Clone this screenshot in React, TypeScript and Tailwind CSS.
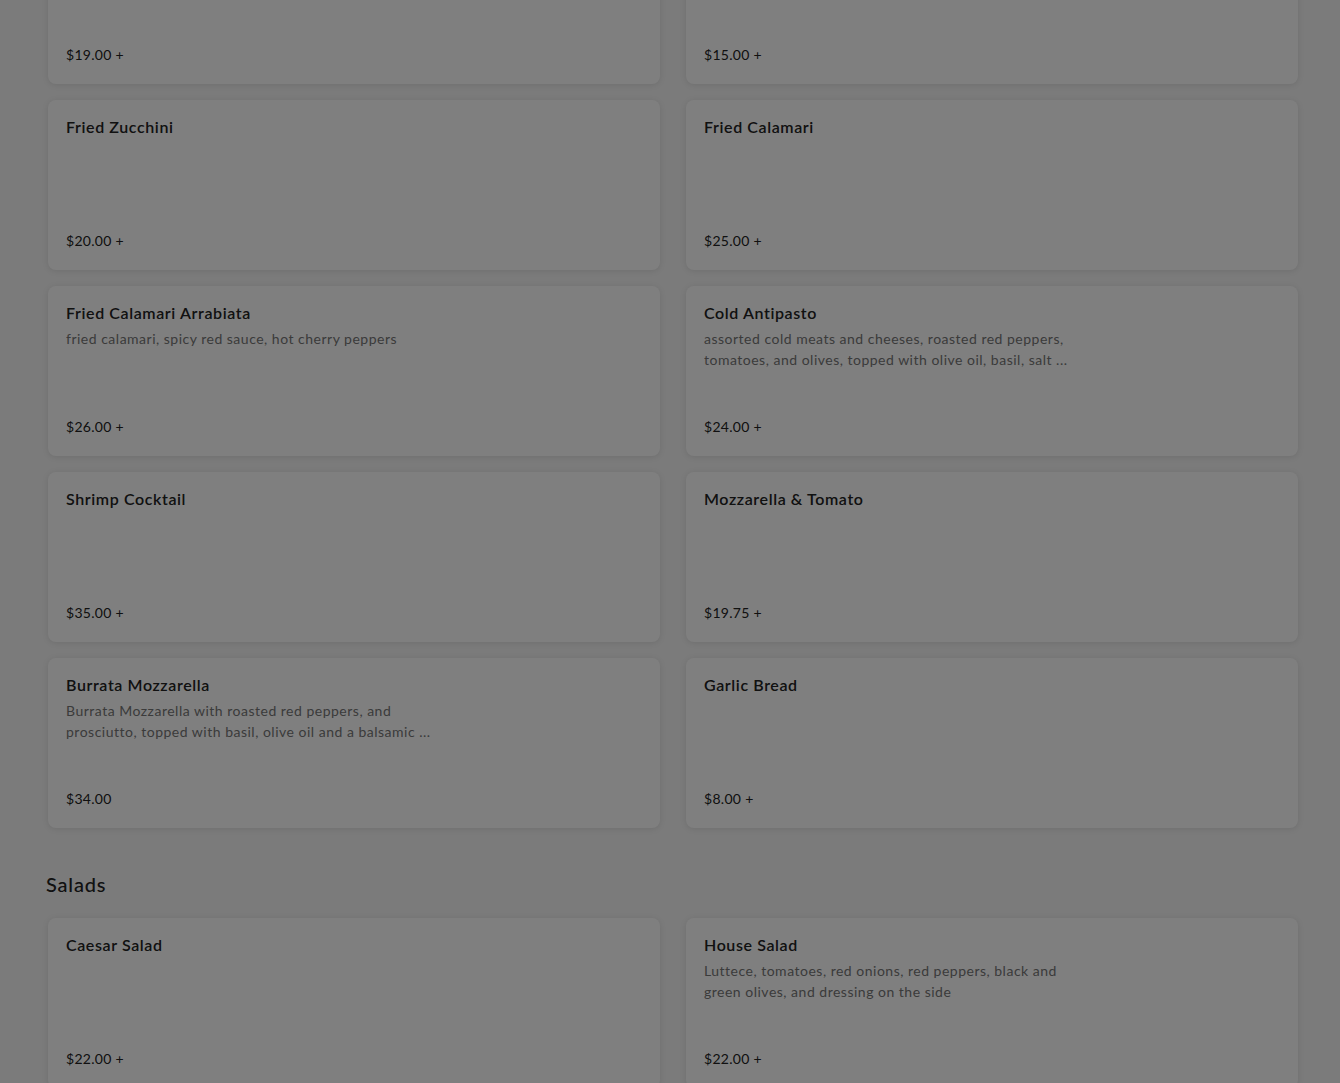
import React from "react";

type Item = { name: string; desc?: string; price: string };

const appetizers: Item[] = [
  { name: "Eggplant Rollatini", price: "$19.00 +" },
  { name: "Mussels Marinara", price: "$15.00 +" },
  { name: "Fried Zucchini", price: "$20.00 +" },
  { name: "Fried Calamari", price: "$25.00 +" },
  { name: "Fried Calamari Arrabiata", desc: "fried calamari, spicy red sauce, hot cherry peppers", price: "$26.00 +" },
  {
    name: "Cold Antipasto",
    desc: "assorted cold meats and cheeses, roasted red peppers, tomatoes, and olives, topped with olive oil, basil, salt ...",
    price: "$24.00 +",
  },
  { name: "Shrimp Cocktail", price: "$35.00 +" },
  { name: "Mozzarella & Tomato", price: "$19.75 +" },
  {
    name: "Burrata Mozzarella",
    desc: "Burrata Mozzarella with roasted red peppers, and prosciutto, topped with basil, olive oil and a balsamic ...",
    price: "$34.00",
  },
  { name: "Garlic Bread", price: "$8.00 +" },
];

const salads: Item[] = [
  { name: "Caesar Salad", price: "$22.00 +" },
  {
    name: "House Salad",
    desc: "Luttece, tomatoes, red onions, red peppers, black and green olives, and dressing on the side",
    price: "$22.00 +",
  },
];

function Card({ item }: { item: Item }) {
  return (
    <div className="flex h-[170px] flex-col justify-between rounded-lg bg-white px-[18px] pt-[15px] pb-[19px] shadow-[0_1px_6px_rgba(0,0,0,0.1)]">
      <div>
        <div className="text-[16px] font-semibold leading-[24px] tracking-[0.6px] text-[#222]">{item.name}</div>
        {item.desc && (
          <div className="mt-[3px] line-clamp-2 w-[380px] text-[14px] leading-[21px] tracking-[0.5px] text-[#767676]">
            {item.desc}
          </div>
        )}
      </div>
      <div className="text-[14px] leading-[20px] tracking-[0.3px] text-[#222]">{item.price}</div>
    </div>
  );
}

export default function App() {
  return (
    <div className="relative min-h-screen overflow-hidden bg-[#f6f6f6]" style={{ fontFamily: "Lato, 'Noto Sans', sans-serif" }}>
      <div className="mx-[48px] mt-[-86px] w-[1250px] pb-10">
        <div className="grid grid-cols-2 gap-x-[26px] gap-y-4">
          {appetizers.map((it) => (
            <Card key={it.name} item={it} />
          ))}
        </div>
        <h2 className="ml-[-2px] mt-[42px] mb-[20px] text-[20px] font-medium leading-[28px] tracking-[0.8px] text-[#222]">
          Salads
        </h2>
        <div className="grid grid-cols-2 gap-x-[26px] gap-y-4">
          {salads.map((it) => (
            <Card key={it.name} item={it} />
          ))}
        </div>
      </div>
      <div className="fixed inset-0 bg-black/50" />
    </div>
  );
}
